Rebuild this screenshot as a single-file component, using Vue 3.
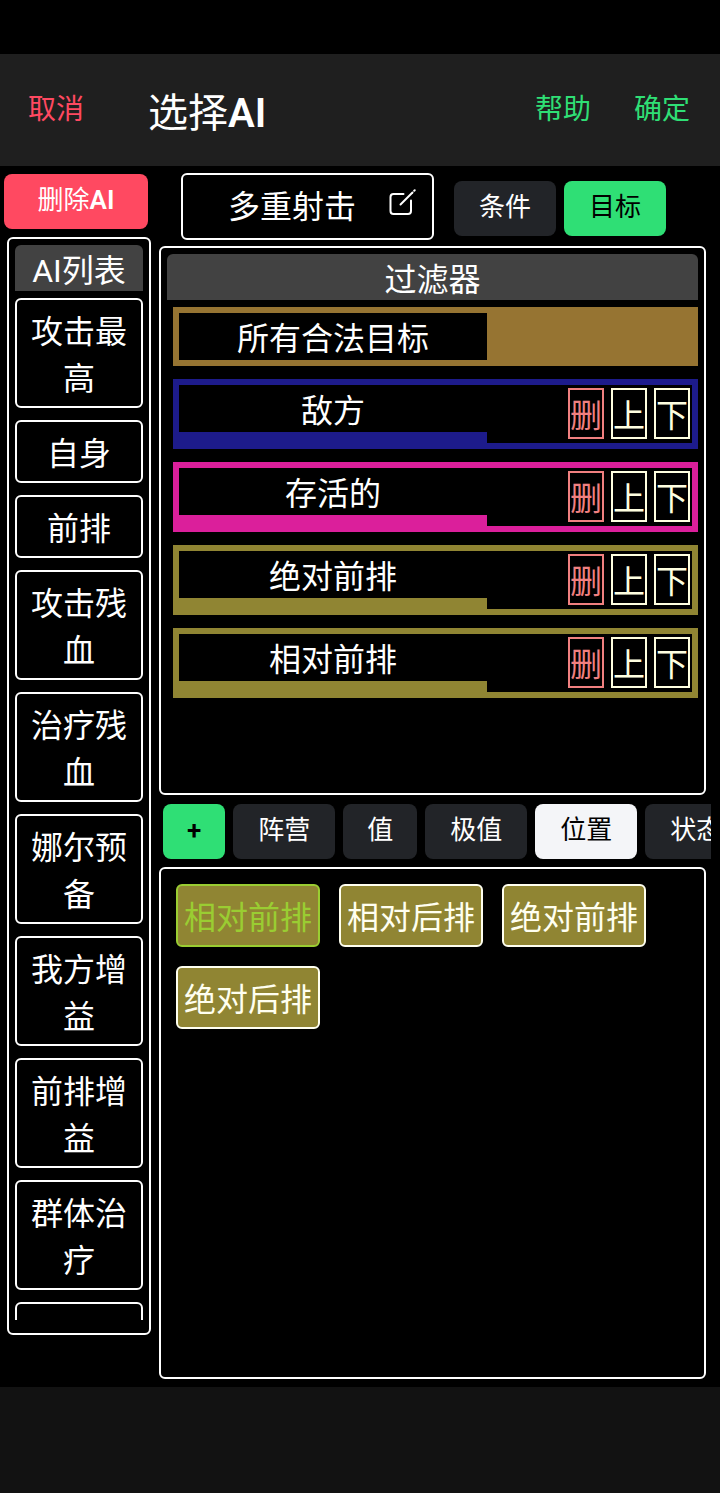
<script setup>
import { ref } from 'vue'

const aiList = ['攻击最高', '自身', '前排', '攻击残血', '治疗残血', '娜尔预备', '我方增益', '前排增益', '群体治疗', '']

const filters = [
  { name: '所有合法目标', kind: 'base', fixed: true },
  { name: '敌方', kind: 'camp' },
  { name: '存活的', kind: 'state' },
  { name: '绝对前排', kind: 'position' },
  { name: '相对前排', kind: 'position' }
]

const categories = ['阵营', '值', '极值', '位置', '状态']
const options = ['相对前排', '相对后排', '绝对前排', '绝对后排']

const mode = ref('目标')
const category = ref('位置')
const option = ref('相对前排')
</script>

<template>
  <div class="page">
    <header class="toolbar">
      <button class="link danger">取消</button>
      <h1>选择<span class="latin strong">AI</span></h1>
      <button class="link">帮助</button>
      <button class="link">确定</button>
    </header>

    <main class="content">
      <aside class="side">
        <button class="btn delete">删除<span class="latin strong">AI</span></button>
        <section class="panel list">
          <h2 class="head"><span class="latin">AI</span>列表</h2>
          <div class="scroll">
            <button v-for="ai in aiList" :key="ai" class="entry">{{ ai }}</button>
          </div>
        </section>
      </aside>

      <div class="editor">
        <div class="top">
          <button class="name">
            <span>多重射击</span>
            <svg viewBox="0 0 28 28" width="28" height="28" fill="none" stroke="currentColor" stroke-width="2" stroke-linecap="round" stroke-linejoin="round" aria-hidden="true">
              <path d="M15.500 6H5.500Q2.500 6 2.500 9V23Q2.500 26 5.500 26H20Q23 26 23 23V12.500" />
              <path d="M12.500 16.500L24.500 4.500" />
              <path d="M26.200 2.800L26.700 2.300" />
            </svg>
          </button>
          <button
            v-for="m in ['条件', '目标']"
            :key="m"
            class="btn"
            :class="{ green: m === mode }"
            @click="mode = m"
          >{{ m }}</button>
        </div>

        <section class="panel filters">
          <h2 class="head">过滤器</h2>
          <div v-for="f in filters" :key="f.name" class="filter" :class="f.kind">
            <span class="label">{{ f.name }}</span>
            <div v-if="!f.fixed" class="actions">
              <button class="act remove">删</button>
              <button class="act">上</button>
              <button class="act">下</button>
            </div>
          </div>
        </section>

        <nav class="tabs">
          <button class="btn green add"><span class="latin strong">+</span></button>
          <button
            v-for="c in categories"
            :key="c"
            class="btn"
            :class="{ light: c === category, short: c.length === 1 }"
            @click="category = c"
          >{{ c }}</button>
        </nav>

        <section class="panel options">
          <button
            v-for="o in options"
            :key="o"
            class="chip"
            :class="{ chosen: o === option }"
            @click="option = o"
          >{{ o }}</button>
        </section>
      </div>
    </main>

    <footer class="bottom"></footer>
  </div>
</template>

<style>
body {
  background: #000;
}
</style>

<style scoped>
.page {
  box-sizing: border-box;
  display: flex;
  flex-direction: column;
  height: 100vh;
  padding-top: 54px;
  background: #000;
  color: #fff;
  font-family: "Noto Sans CJK SC", sans-serif;
  font-size: 32px;
  line-height: 47px;
}

.page *,
.page *::before {
  box-sizing: border-box;
}

h1,
h2 {
  margin: 0;
  font-weight: 400;
}

button {
  margin: 0;
  padding: 0;
  border: 0;
  background: none;
  color: inherit;
  font: inherit;
  cursor: pointer;
}

.latin {
  font-family: Roboto, sans-serif;
  line-height: 1;
}

.strong {
  font-weight: 600;
}

.toolbar {
  flex: none;
  display: flex;
  align-items: center;
  height: 112px;
  padding: 0 30px 0 28px;
  background: #1f1f1f;
}

.toolbar h1 {
  flex: 1;
  margin-left: 64px;
  font-size: 40px;
}

.link {
  padding-bottom: 6px;
  color: #2fdf75;
  font-size: 28px;
}

.link + .link {
  margin-left: 43px;
}

.link.danger {
  color: #ff4961;
}

.content {
  flex: 1;
  min-height: 0;
  display: grid;
  grid-template-columns: 151px minmax(0, 1fr);
  column-gap: 8px;
  padding-right: 9px;
}

.side,
.editor {
  display: flex;
  flex-direction: column;
  min-height: 0;
}

.side {
  padding: 8px 0 52px;
}

.btn {
  flex: none;
  height: 55px;
  min-width: 102px;
  padding: 0 24px 8px;
  border-radius: 8px;
  background: #222428;
  font-size: 26px;
  white-space: nowrap;
}

.btn.short,
.btn.add {
  min-width: 0;
}

.btn.green {
  background: #2fdf75;
  color: #000;
}

.btn.light {
  background: #f4f5f8;
  color: #000;
}

.btn.delete {
  margin: 0 3px 8px 4px;
  background: #ff4961;
}

.panel {
  border: 2px solid #fff;
  border-radius: 6px;
}

.head {
  flex: none;
  height: 46px;
  border-radius: 6px 6px 0 0;
  background: #424242;
  font-size: 32px;
  text-align: center;
}

.list {
  flex: 1;
  display: flex;
  flex-direction: column;
  min-height: 0;
  margin-left: 7px;
  padding: 6px 6px 13px;
}

.scroll {
  display: flex;
  flex-direction: column;
  gap: 12px;
  min-height: 0;
  padding-top: 7px;
  overflow: hidden;
}

.entry {
  flex: none;
  min-height: 63px;
  padding: 6px 12px;
  border: 2px solid #fff;
  border-radius: 6px;
}

.top {
  flex: none;
  display: flex;
  align-items: center;
  gap: 8px;
  height: 80px;
  padding-left: 22px;
}

.top .btn {
  margin-top: 4px;
}

.name {
  display: flex;
  align-items: center;
  justify-content: flex-end;
  gap: 32px;
  width: 253px;
  height: 67px;
  margin-right: 12px;
  padding: 0 16px 4px 0;
  border: 2px solid #fff;
  border-radius: 6px;
}

.name svg {
  margin-bottom: 4px;
}

.filters {
  flex: 0 0 45%;
  display: flex;
  flex-direction: column;
  gap: 13px;
  margin-right: 5px;
  padding: 6px 6px 0;
}

.filters .head {
  margin-bottom: -6px;
}

.filter {
  display: flex;
  align-items: flex-start;
  margin-left: 6px;
  padding: 6px;
}

.label {
  flex: 0 0 60%;
  background: #000;
  text-align: center;
}

.actions {
  flex: 1;
  display: flex;
  justify-content: flex-end;
  gap: 7px;
  padding: 3px 2px 4px;
  background: #000;
}

.act {
  border: 2px solid #ffffe0;
  color: #ffffe0;
}

.act.remove {
  border-color: #f08080;
  color: #f08080;
}

.base {
  background: #967432;
}

.camp {
  background: #1d1b8b;
}

.state {
  background: #db1f9b;
}

.position {
  background: #908533;
}

.tabs {
  flex: none;
  display: flex;
  gap: 8px;
  padding: 9px 0 8px 4px;
  overflow: hidden;
}

.options {
  flex: 1;
  display: flex;
  flex-wrap: wrap;
  align-content: flex-start;
  gap: 19px;
  margin: 0 5px 8px 0;
  padding: 15px;
}

.chip {
  padding: 6px;
  border: 2px solid #fffff0;
  border-radius: 6px;
  background: #908533;
  color: #fffff0;
}

.chip.chosen {
  border-color: #9acd32;
  color: #9acd32;
}

.bottom {
  flex: none;
  height: 106px;
  background: #121212;
}
</style>
